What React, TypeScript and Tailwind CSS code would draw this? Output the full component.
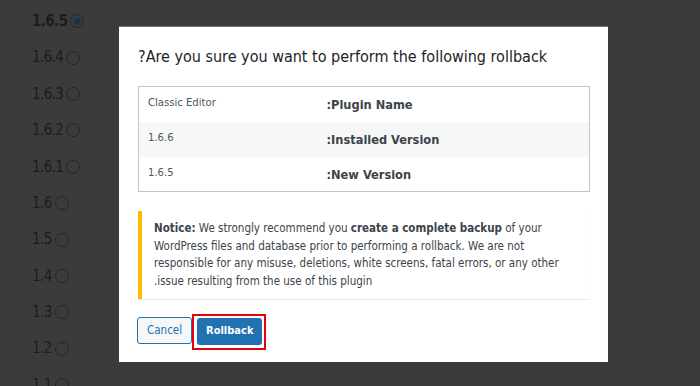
const versions = ['1.6.5', '1.6.4', '1.6.3', '1.6.2', '1.6.1', '1.6', '1.5', '1.4', '1.3', '1.2', '1.1']

const rows = [
  { value: 'Classic Editor', label: ':Plugin Name' },
  { value: '1.6.6', label: ':Installed Version', shaded: true },
  { value: '1.6.5', label: ':New Version' },
]

export default function App() {
  return (
    <div
      className="relative w-[700px] h-[386px] overflow-hidden bg-[#3b3b3b] font-stretch-condensed"
      style={{ fontFamily: '"DejaVu Sans", "Noto Sans", sans-serif' }}
    >
      {/* version list behind overlay */}
      <ul className="flex flex-col pl-8 pt-[3px]">
        {versions.map((v, i) => (
          <li key={v} className="flex items-center h-[36.4px] text-[15px] text-[#1c1c1c]">
            <span className={i === 0 ? 'font-bold tracking-[-0.6px]' : 'tracking-[-0.6px]'}>{v}</span>
            <span className="ml-[3px] w-[14px] h-[14px] rounded-full border border-[#262626] flex items-center justify-center">
              {i === 0 && <span className="w-[7px] h-[7px] rounded-full bg-[#173450]" />}
            </span>
          </li>
        ))}
      </ul>

      {/* modal */}
      <div className="absolute left-[119px] top-[26px] w-[489px] h-[336px] bg-white border-t border-[#6f6f6f] pl-[19px] pr-[18px]">
        <h2 className="pt-[18px] text-[16px] leading-[24px] text-[#1d2327]">
          ?Are you sure you want to perform the following rollback
        </h2>

        <table className="mt-[17px] w-[452px] border border-[#c3c4c7] border-collapse">
          <tbody>
            {rows.map((r) => (
              <tr key={r.label} className={`h-[35px] ${r.shaded ? 'bg-[#f6f7f7]' : ''}`}>
                <td className="w-[188px] pl-[9px] pt-[8px] align-top text-[11.2px] text-[#50575e]">
                  {r.value}
                </td>
                <td className="text-[12.7px] font-bold text-[#3c434a] pt-[1px]">{r.label}</td>
              </tr>
            ))}
          </tbody>
        </table>

        <div className="mt-[19px] w-[452px] border-l-4 border-[#ffb900] bg-white shadow-[0_1px_1px_rgba(0,0,0,0.08)] pl-[12px] pr-[10px] pt-[9px] pb-[8px] text-[11.5px] leading-[17.7px] text-[#3c434a]">
          <strong>Notice:</strong> We strongly recommend you <strong>create a complete backup</strong> of your
          WordPress files and database prior to performing a rollback. We are not responsible for any misuse,
          deletions, white screens, fatal errors, or any other .issue resulting from the use of this plugin
        </div>

        <div className="mt-[18px] flex items-center">
          <button className="h-[27px] px-[9px] -ml-[1px] rounded-[3px] border border-[#2271b1] bg-[#f6f7f7] text-[#2271b1] text-[11.5px]">
            Cancel
          </button>
          <div className="relative ml-[5px]">
            <button className="h-[27px] px-[9px] rounded-[3px] bg-[#2271b1] text-white text-[11px] font-semibold">
              Rollback
            </button>
            <span className="absolute left-[-5px] right-[-4px] top-[-3px] bottom-[-5px] border-2 border-[#e4000f]" />
          </div>
        </div>
      </div>
    </div>
  )
}
